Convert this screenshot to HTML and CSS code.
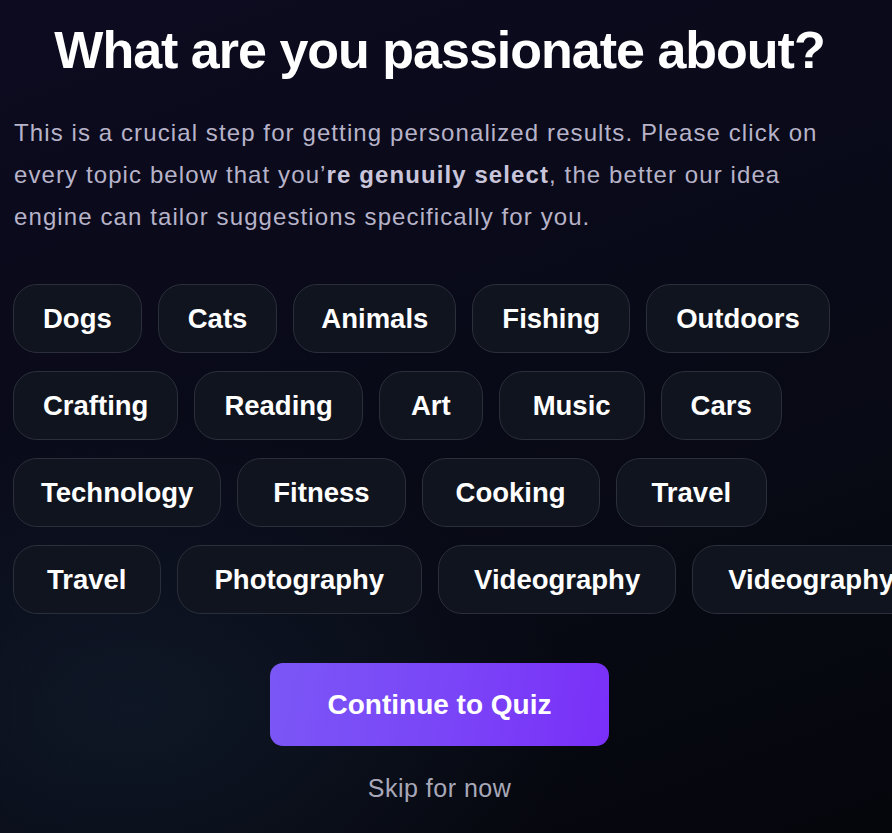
FILE: index.html
```html
<!DOCTYPE html>
<html lang="en">
<head>
<meta charset="utf-8">
<title>What are you passionate about?</title>
<link rel="stylesheet" href="styles.css">
</head>
<body>
<main class="page">
  <h1 class="title">What are you passionate about?</h1>
  <p class="intro">This is a crucial step for getting personalized results. Please click on every topic below that you’<strong>re genuuily select</strong>, the better our idea engine can tailor suggestions specifically for you.</p>

  <div class="topics">
    <div class="topic-row">
      <button class="chip">Dogs</button>
      <button class="chip">Cats</button>
      <button class="chip chip-sm">Animals</button>
      <button class="chip">Fishing</button>
      <button class="chip">Outdoors</button>
    </div>
    <div class="topic-row">
      <button class="chip">Crafting</button>
      <button class="chip">Reading</button>
      <button class="chip chip-md">Art</button>
      <button class="chip chip-lg">Music</button>
      <button class="chip">Cars</button>
    </div>
    <div class="topic-row">
      <button class="chip chip-sm">Technology</button>
      <button class="chip chip-xl">Fitness</button>
      <button class="chip chip-lg">Cooking</button>
      <button class="chip chip-xl">Travel</button>
    </div>
    <div class="topic-row">
      <button class="chip chip-lg">Travel</button>
      <button class="chip chip-xxl">Photography</button>
      <button class="chip chip-xl">Videography</button>
      <button class="chip chip-xl">Videography</button>
    </div>
  </div>

  <div class="actions">
    <button class="cta">Continue to Quiz</button>
    <a class="skip" href="#">Skip for now</a>
  </div>
</main>
</body>
</html>
```

FILE: styles.css
```css
* {
  box-sizing: border-box;
}

html, body {
  margin: 0;
  height: 100%;
}

body {
  overflow: hidden;
  font-family: "Liberation Sans", Arial, sans-serif;
  color: #ffffff;
  background:
    radial-gradient(ellipse 70% 50% at 15% 85%, rgba(20, 34, 52, 0.55), rgba(20, 34, 52, 0) 70%),
    linear-gradient(160deg, #0d0b20 0%, #090a18 45%, #070912 75%, #05060c 100%);
}

.page {
  display: flex;
  flex-direction: column;
  padding: 19px 26px 0 13px;
}

.title {
  margin: 0;
  font-size: 52px;
  line-height: 62px;
  font-weight: 700;
  letter-spacing: -1px;
  text-align: center;
  color: #ffffff;
}

.intro {
  margin: 31px 0 0 1px;
  max-width: 845px;
  font-size: 24px;
  line-height: 42px;
  letter-spacing: 1.1px;
  color: #b7b3c9;
}

.intro strong {
  font-weight: 700;
  letter-spacing: 1.1px;
  color: #c9c5da;
}

.topics {
  display: flex;
  flex-direction: column;
  gap: 18px;
  margin-top: 46px;
}

.topic-row {
  display: flex;
  flex-wrap: nowrap;
  gap: 16px;
}

.chip {
  flex: none;
  display: flex;
  align-items: center;
  justify-content: center;
  height: 69px;
  padding: 0 29px;
  border: 1px solid #2a2f3b;
  border-radius: 24px;
  background: #10141e;
  color: #ffffff;
  font-family: "Liberation Sans", Arial, sans-serif;
  font-size: 27.5px;
  font-weight: 700;
  white-space: nowrap;
}

.chip-sm {
  padding: 0 27px;
}

.chip-md {
  padding: 0 31px;
}

.chip-lg {
  padding: 0 33px;
}

.chip-xl {
  padding: 0 35px;
}

.chip-xxl {
  padding: 0 37px;
}

.actions {
  display: flex;
  flex-direction: column;
  align-items: center;
  margin-top: 49px;
}

.cta {
  width: 339px;
  height: 83px;
  border: none;
  border-radius: 13px;
  background: linear-gradient(100deg, #7b57f6 0%, #7a46f7 50%, #7a2ff8 100%);
  color: #ffffff;
  font-family: "Liberation Sans", Arial, sans-serif;
  font-size: 28px;
  font-weight: 700;
}

.skip {
  margin-top: 27px;
  font-size: 25px;
  line-height: 30px;
  letter-spacing: 0.5px;
  color: #a9a8b8;
  text-decoration: none;
}
```
